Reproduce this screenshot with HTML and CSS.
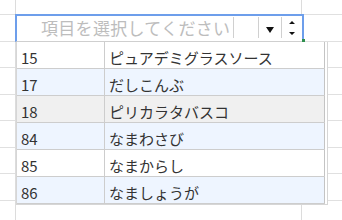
FILE: index.html
```html
<!DOCTYPE html>
<html>
<head>
    <title>項目を選択</title>
    <link rel="stylesheet" href="styles.css">
</head>
<body>
    <div class="sheet">
        <div class="combo">
            <div class="field">
                <span class="placeholder">項目を選択してください</span>
                <span class="gap"></span>
                <span class="btn">
                    <svg width="8" height="6" viewBox="0 0 8 6"><path d="M0 0H8L4 6Z" fill="#111"/></svg>
                </span>
                <span class="spin">
                    <svg width="6" height="14" viewBox="0 0 6 14"><path d="M3 0L6 3H0Z M0 11H6L3 14Z" fill="#111"/></svg>
                </span>
                <span class="handle"></span>
            </div>
            <div class="list">
                <table>
                    <tr><td class="code">15</td><td>ピュアデミグラスソース</td></tr>
                    <tr class="alt"><td class="code">17</td><td>だしこんぶ</td></tr>
                    <tr class="hover"><td class="code">18</td><td>ピリカラタバスコ</td></tr>
                    <tr class="alt"><td class="code">84</td><td>なまわさび</td></tr>
                    <tr><td class="code">85</td><td>なまからし</td></tr>
                    <tr class="alt"><td class="code">86</td><td>なましょうが</td></tr>
                </table>
            </div>
        </div>
    </div>
</body>
</html>
```

FILE: styles.css
```css
body {
    margin: 0;
    font-family: "Noto Sans CJK JP", "Noto Sans", sans-serif;
    color: #333;
}
.sheet {
    width: 342px;
    height: 220px;
    overflow: hidden;
    background-color: #fff;
    background-image:
        linear-gradient(to right, transparent 15px, #dcdcdc 15px 16px, transparent 16px 301px, #dcdcdc 301px 302px, transparent 302px),
        linear-gradient(#e0e0e0 0 1px, transparent 1px 27px, #e0e0e0 27px 28px, transparent 28px);
    background-size: 100% 100%, 100% 53px;
    background-position: 0 0, 0 14px;
    background-repeat: no-repeat, repeat-y;
    padding-top: 14px;
    box-sizing: border-box;
}
.combo {
    margin-left: 15px;
    width: 312px;
}
.field {
    position: relative;
    display: flex;
    box-sizing: border-box;
    width: 289px;
    height: 28px;
    background: #fff;
    border: 2px solid #6d9eeb;
    border-bottom: 1px solid #cfcfcf;
}
.placeholder {
    width: 192px;
    padding-left: 24px;
    margin: 1px 0 3px;
    border-right: 1px solid #d0d0d0;
    font-size: 17px;
    letter-spacing: 0.3px;
    line-height: 21px;
    color: #bdbdbd;
    white-space: nowrap;
}
.gap {
    width: 24px;
}
.btn, .spin {
    display: flex;
    align-items: center;
    justify-content: center;
    margin: 1px 0 3px;
    border-left: 1px solid #d0d0d0;
}
.btn {
    width: 22px;
}
.btn svg {
    margin-top: 4px;
}
.spin {
    width: 19px;
}
.handle {
    position: absolute;
    right: -3px;
    bottom: -1px;
    width: 3px;
    height: 3px;
    background: #2f8f4e;
}
.list {
    margin-left: 1px;
    width: 312px;
    box-sizing: border-box;
    background: #fff;
    border: 1px solid #d6d6d6;
    border-top: none;
    padding-right: 2px;
}
table {
    width: 308px;
    border-collapse: collapse;
    border-right: 1px solid #c4c4c4;
    font-size: 15px;
}
td {
    height: 26px;
    padding: 0 4px 0;
    line-height: 20px;
    vertical-align: bottom;
    border-bottom: 1px solid #cdcdcd;
    white-space: nowrap;
}
td.code {
    width: 79px;
    border-right: 1px solid #cdcdcd;
}
tr.alt td {
    background: #eef5ff;
}
tr.hover td {
    background: #f0f0f0;
}
```
